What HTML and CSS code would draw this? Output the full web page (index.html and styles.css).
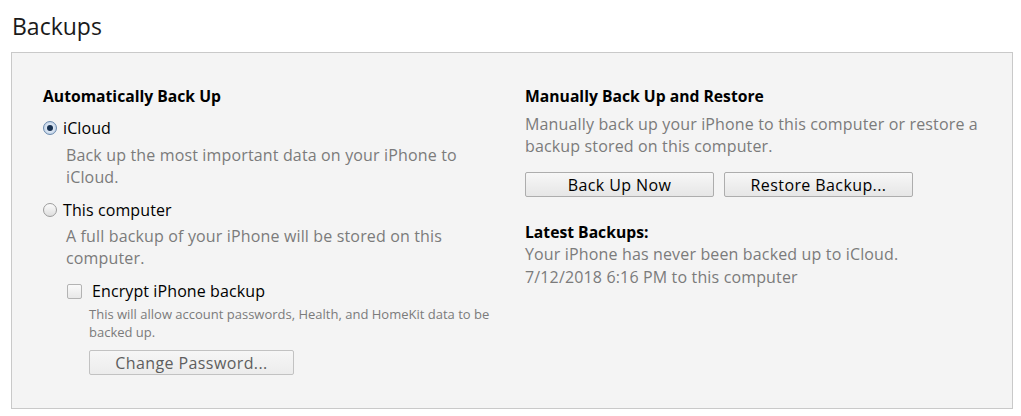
FILE: index.html
```html
<!DOCTYPE html>
<html>
<head>
<meta charset="utf-8">
<link rel="stylesheet" href="styles.css">
</head>
<body>
<h1 class="title">Backups</h1>
<section class="panel">
  <div class="col col-left">
    <h2 class="heading">Automatically Back Up</h2>
    <div class="option">
      <span class="radio checked"><span class="dot"></span></span>
      <span class="label">iCloud</span>
    </div>
    <p class="desc indent">Back up the most important data on your iPhone to<br>iCloud.</p>
    <div class="option opt2">
      <span class="radio"></span>
      <span class="label">This computer</span>
    </div>
    <p class="desc indent desc2">A full backup of your iPhone will be stored on this<br>computer.</p>
    <div class="check-row">
      <span class="checkbox"></span>
      <span class="label">Encrypt iPhone backup</span>
    </div>
    <p class="small">This will allow account passwords, Health, and HomeKit data to be<br>backed up.</p>
    <button class="btn btn-disabled btn-pw">Change Password...</button>
  </div>
  <div class="col col-right">
    <h2 class="heading">Manually Back Up and Restore</h2>
    <p class="desc">Manually back up your iPhone to this computer or restore a<br>backup stored on this computer.</p>
    <div class="btn-row">
      <button class="btn">Back Up Now</button>
      <button class="btn">Restore Backup...</button>
    </div>
    <h2 class="heading latest">Latest Backups:</h2>
    <p class="desc latest-desc">Your iPhone has never been backed up to iCloud.<br>7/12/2018 6:16 PM to this computer</p>
  </div>
</section>
</body>
</html>
```

FILE: styles.css
```css
* { box-sizing: border-box; }
html, body { margin: 0; padding: 0; background: #ffffff; }
body {
  font-family: "Open Sans", "Noto Sans", "DejaVu Sans", sans-serif;
  color: #111;
  width: 1021px;
  height: 416px;
  overflow: hidden;
}
.title {
  margin: 0;
  padding: 10px 0 0 12px;
  height: 52px;
  font-size: 23px;
  font-weight: 400;
  line-height: 32px;
  color: #1a1a1a;
}
.panel {
  margin-left: 11px;
  width: 1002px;
  height: 357px;
  background: #f4f4f4;
  border: 1px solid #c9c9c9;
  display: flex;
  padding: 32px 0 0 31px;
}
.col { display: flex; flex-direction: column; align-items: flex-start; }
.col-left { width: 482px; }
.col-right { width: 470px; }
.heading {
  margin: 0;
  font-size: 15.7px;
  font-weight: 700;
  line-height: 22px;
  color: #000;
}
.option {
  display: flex;
  align-items: center;
  gap: 6px;
  margin-top: 10px;
  height: 22px;
}
.opt2 { margin-top: 11px; }
.label { font-size: 16px; letter-spacing: 0.1px; line-height: 22px; color: #000; }
.radio {
  width: 14px;
  height: 14px;
  border-radius: 50%;
  border: 1px solid #9c9c9c;
  background: linear-gradient(#fbfbfb, #dedede);
  display: flex;
  align-items: center;
  justify-content: center;
}
.radio.checked {
  border-color: #6a89ad;
  background: radial-gradient(circle, #e0eaf6 35%, #b0c5dd 100%);
}
.dot {
  width: 6px;
  height: 6px;
  border-radius: 50%;
  background: #16304f;
}
.desc {
  margin: 5px 0 0 0;
  font-size: 16px;
  letter-spacing: 0.15px;
  line-height: 22px;
  color: #7b7b7b;
}
.indent { margin-left: 23px; }
.desc2 { margin-top: 4px; }
.check-row {
  display: flex;
  align-items: center;
  gap: 10px;
  margin: 11px 0 0 24px;
  height: 22px;
}
.checkbox {
  width: 15px;
  height: 15px;
  border: 1px solid #b3b3b3;
  border-radius: 2px;
  background: linear-gradient(#fafafa, #e8e8e8);
}
.small {
  margin: 3px 0 0 46px;
  font-size: 13px;
  line-height: 18px;
  color: #7b7b7b;
}
.btn {
  font-family: inherit;
  font-size: 16px;
  letter-spacing: 0.4px;
  color: #000;
  height: 25px;
  padding: 0;
  border: 1px solid #adadad;
  border-radius: 2px;
  background: linear-gradient(#f7f7f7, #e6e6e6);
  line-height: 22px;
}
.btn-pw {
  width: 205px;
  margin: 9px 0 0 46px;
}
.btn-disabled {
  color: #5e5e5e;
  border-color: #c2c2c2;
  background: linear-gradient(#f6f6f6, #ececec);
}
.btn-row { display: flex; gap: 10px; margin-top: 15px; }
.btn-row .btn { width: 189px; height: 25px; }
.latest { margin-top: 24px; }
.col-right .desc { margin-top: 6px; }
.col-right .latest-desc { margin-top: 0; line-height: 23px; }
```
